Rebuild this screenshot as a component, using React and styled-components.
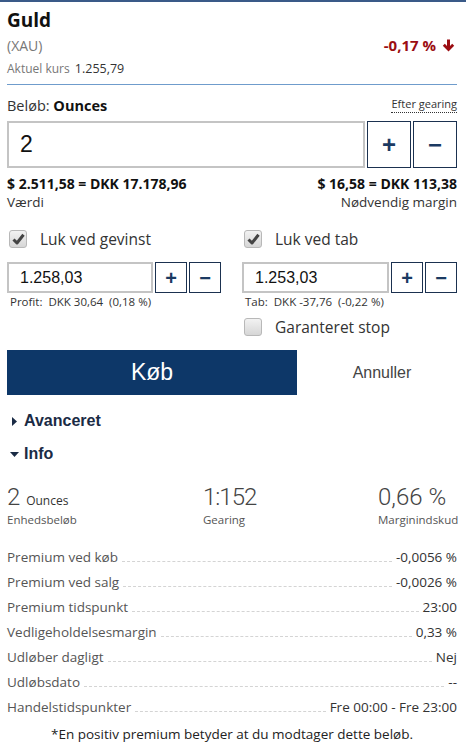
import React from 'react'
import styled, { createGlobalStyle } from 'styled-components'

const GlobalStyle = createGlobalStyle`
  body {
    margin: 0;
    background: #fff;
    font-family: "Open Sans", "Noto Sans", sans-serif;
    color: #333;
  }
`

const navy = '#0d3768'

const rows = [
  ['Premium ved køb', '-0,0056 %'],
  ['Premium ved salg', '-0,0026 %'],
  ['Premium tidspunkt', '23:00'],
  ['Vedligeholdelsesmargin', '0,33 %'],
  ['Udløber dagligt', 'Nej'],
  ['Udløbsdato', '--'],
  ['Handelstidspunkter', 'Fre 00:00 - Fre 23:00'],
]

function Check({ checked }) {
  return (
    <Box>
      {checked && (
        <svg width="13" height="12" viewBox="0 0 13 12">
          <path d="M1.5 6.5 L5 10 L11.5 1.8" fill="none" stroke="#444" strokeWidth="3" strokeLinejoin="round" />
        </svg>
      )}
    </Box>
  )
}

function Stepper({ value, big }) {
  return (
    <StepRow big={big}>
      <Field big={big}>{value}</Field>
      <StepButton big={big}>+</StepButton>
      <StepButton big={big}>−</StepButton>
    </StepRow>
  )
}

function App() {
  return (
    <>
      <GlobalStyle />
      <Page>
        <Header>
          <Title>Guld</Title>
          <SubRow>
            <Ticker>(XAU)</Ticker>
            <Change>
              -0,17 %
              <svg width="13" height="13" viewBox="0 0 13 13">
                <path d="M6.5 12.5 L0.8 6.8 L2.8 4.8 L5 7 V0.5 H8 V7 L10.2 4.8 L12.2 6.8 Z" fill="#9b0d12" />
              </svg>
            </Change>
          </SubRow>
          <Kurs>Aktuel kurs <span>1.255,79</span></Kurs>
        </Header>

        <AmountRow>
          <span>Beløb: <b>Ounces</b></span>
          <Gearing>Efter gearing</Gearing>
        </AmountRow>
        <Stepper value="2" big />

        <ValueRow>
          <b>$ 2.511,58 = DKK 17.178,96</b>
          <b>$ 16,58 = DKK 113,38</b>
        </ValueRow>
        <LabelRow>
          <span>Værdi</span>
          <span>Nødvendig margin</span>
        </LabelRow>

        <Columns>
          <Column>
            <CheckRow>
              <Check checked />
              <span>Luk ved gevinst</span>
            </CheckRow>
            <Stepper value="1.258,03" />
            <Hint>Profit:&nbsp; DKK 30,64&nbsp; (0,18 %)</Hint>
          </Column>
          <Column>
            <CheckRow>
              <Check checked />
              <span>Luk ved tab</span>
            </CheckRow>
            <Stepper value="1.253,03" />
            <Hint>Tab:&nbsp; DKK -37,76&nbsp; (-0,22 %)</Hint>
            <CheckRow stop>
              <Check />
              <span>Garanteret stop</span>
            </CheckRow>
          </Column>
        </Columns>

        <Actions>
          <BuyButton>Køb</BuyButton>
          <CancelButton>Annuller</CancelButton>
        </Actions>

        <Section first>
          <Caret>
            <svg viewBox="0 0 5 9" width="5" height="9"><path d="M0 0 L5 4.5 L0 9 Z" fill="#1a2b45" /></svg>
          </Caret>
          Avanceret
        </Section>
        <Section>
          <Caret>
            <svg viewBox="0 0 9 5" width="9" height="5"><path d="M0 0 H9 L4.5 5 Z" fill="#1a2b45" /></svg>
          </Caret>
          Info
        </Section>

        <Stats>
          <Stat>
            <Big>2 <small>Ounces</small></Big>
            <StatLabel>Enhedsbeløb</StatLabel>
          </Stat>
          <Stat>
            <Big tight>1:152</Big>
            <StatLabel>Gearing</StatLabel>
          </Stat>
          <Stat>
            <Big>0,66 %</Big>
            <StatLabel>Marginindskud</StatLabel>
          </Stat>
        </Stats>

        <Table>
          {rows.map(([k, v]) => (
            <Row key={k}>
              <RowLabel>{k}</RowLabel>
              <Leader />
              <RowValue>{v}</RowValue>
            </Row>
          ))}
        </Table>

        <Footnote>*En positiv premium betyder at du modtager dette beløb.</Footnote>
      </Page>
    </>
  )
}

const Page = styled.div`
  border-top: 2px solid #3a5a88;
  padding: 0 9px 0 7px;
`

const Header = styled.div`
  padding-top: 6px;
  padding-bottom: 4px;
  border-bottom: 1px solid #6f9ccc;
`

const Title = styled.div`
  font-size: 19px;
  font-weight: 700;
  line-height: 24px;
  color: #111;
`

const SubRow = styled.div`
  display: flex;
  justify-content: space-between;
  align-items: center;
  height: 26px;
`

const Ticker = styled.span`
  font-size: 14px;
  color: #777;
`

const Change = styled.span`
  display: flex;
  align-items: center;
  gap: 6px;
  font-size: 15px;
  font-weight: 700;
  color: #9b0d12;
  padding-right: 2px;
`

const Kurs = styled.div`
  font-size: 12px;
  line-height: 22px;
  color: #777;
  span {
    color: #333;
    margin-left: 2px;
    font-size: 12.5px;
  }
`

const AmountRow = styled.div`
  display: flex;
  justify-content: space-between;
  align-items: flex-end;
  margin-top: 11px;
  line-height: 20px;
  font-size: 14.5px;
  color: #333;
  b {
    color: #111;
  }
`

const Gearing = styled.span`
  font-size: 11px;
  line-height: 16px;
  color: #333;
  border-bottom: 1px dotted #333;
  margin-bottom: 3px;
`

const StepRow = styled.div`
  display: flex;
  gap: 2px;
  margin-top: ${p => (p.big ? '5px' : '13px')};
  height: ${p => (p.big ? '47px' : '31px')};
`

const Field = styled.div`
  flex: 1;
  border: 2px solid #c4c4c4;
  display: flex;
  align-items: center;
  padding-left: 11px;
  font-family: "Liberation Sans", Arial, sans-serif;
  font-size: ${p => (p.big ? '23px' : '16px')};
  color: #111;
`

const StepButton = styled.div`
  width: ${p => (p.big ? '42px' : '30px')};
  border: 1px solid #1b3150;
  display: flex;
  align-items: center;
  justify-content: center;
  font-family: "Liberation Sans", Arial, sans-serif;
  font-size: ${p => (p.big ? '24px' : '20px')};
  font-weight: 700;
  color: #1b3a62;
  line-height: 1;
`

const ValueRow = styled.div`
  display: flex;
  justify-content: space-between;
  margin-top: 7px;
  line-height: 18px;
  font-size: 14px;
  color: #111;
`

const LabelRow = styled.div`
  display: flex;
  justify-content: space-between;
  line-height: 18px;
  font-size: 13.5px;
  color: #333;
`

const Columns = styled.div`
  display: grid;
  grid-template-columns: 214px 1fr;
  gap: 21px;
  margin-top: 18px;
`

const Column = styled.div`
  display: flex;
  flex-direction: column;
`

const CheckRow = styled.label`
  display: flex;
  align-items: center;
  gap: 13px;
  height: 20px;
  padding-left: 2px;
  margin-top: ${p => (p.stop ? '8px' : '0')};
  font-size: 15.5px;
  color: #333;
`

const Box = styled.span`
  width: 16px;
  height: 16px;
  border: 1px solid #b8b8b8;
  border-radius: 3px;
  background: linear-gradient(#f2f2f2, #d6d6d6);
  display: flex;
  align-items: center;
  justify-content: center;
`

const Hint = styled.div`
  margin-top: 2px;
  line-height: 14px;
  font-size: 11.5px;
  color: #333;
  padding-left: 3px;
`

const Actions = styled.div`
  display: flex;
  margin-top: 13px;
  height: 45px;
`

const BuyButton = styled.div`
  width: 290px;
  background: ${navy};
  color: #fff;
  display: flex;
  align-items: center;
  justify-content: center;
  font-family: "Liberation Sans", Arial, sans-serif;
  font-size: 23px;
`

const CancelButton = styled.div`
  flex: 1;
  display: flex;
  align-items: center;
  justify-content: center;
  padding-left: 10px;
  font-family: "Liberation Sans", Arial, sans-serif;
  font-size: 16px;
  color: #444;
`

const Section = styled.div`
  display: flex;
  align-items: center;
  margin-top: ${p => (p.first ? '14px' : '9px')};
  height: 24px;
  font-family: "Liberation Sans", Arial, sans-serif;
  font-size: 16px;
  font-weight: 700;
  color: #1a2b45;
`

const Caret = styled.span`
  width: 15px;
  flex: none;
  display: flex;
  justify-content: center;
  padding-right: 2px;
`

const Stats = styled.div`
  display: grid;
  grid-template-columns: 196px 175px 1fr;
  margin-top: 16px;
`

const Stat = styled.div`
  text-align: left;
`

const Big = styled.div`
  font-family: Roboto, "Open Sans", sans-serif;
  font-size: 24px;
  font-weight: 300;
  line-height: 30px;
  letter-spacing: ${p => (p.tight ? '-1px' : '0')};
  color: #444;
  small {
    font-family: "Open Sans", sans-serif;
    font-size: 12px;
    font-weight: 400;
    line-height: 0;
    letter-spacing: 0;
    color: #333;
  }
`

const StatLabel = styled.div`
  font-size: 11.5px;
  line-height: 16px;
  color: #555;
`

const Table = styled.div`
  margin-top: 17px;
`

const Row = styled.div`
  display: flex;
  align-items: baseline;
  height: 25px;
  line-height: 25px;
  font-size: 13.5px;
`

const RowLabel = styled.span`
  color: #555;
`

const Leader = styled.span`
  flex: 1;
  margin: 0 4px;
  border-bottom: 1px dashed #d4d4d4;
`

const RowValue = styled.span`
  color: #333;
`

const Footnote = styled.div`
  margin-top: 4px;
  text-align: center;
  line-height: 20px;
  font-size: 13.5px;
  color: #222;
`

export default App
